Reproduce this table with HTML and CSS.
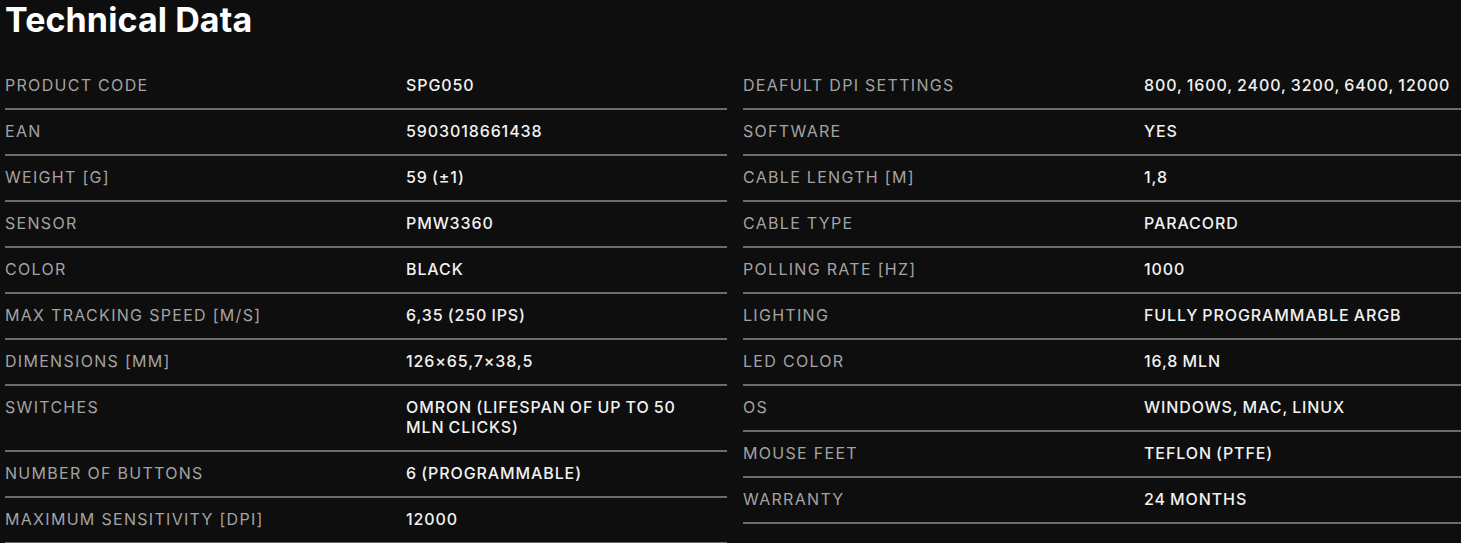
FILE: index.html
```html
<!DOCTYPE html>
<html>
<head>
<meta charset="utf-8">
<link rel="stylesheet" href="styles.css">
</head>
<body>
<section class="tech">
  <h2 class="tech-title">Technical Data</h2>
  <div class="tech-grid">
    <div class="tech-col">
      <div class="row"><div class="label">PRODUCT CODE</div><div class="value">SPG050</div></div>
      <div class="row"><div class="label">EAN</div><div class="value">5903018661438</div></div>
      <div class="row"><div class="label">WEIGHT [G]</div><div class="value">59 (±1)</div></div>
      <div class="row"><div class="label">SENSOR</div><div class="value">PMW3360</div></div>
      <div class="row"><div class="label">COLOR</div><div class="value">BLACK</div></div>
      <div class="row"><div class="label">MAX TRACKING SPEED [M/S]</div><div class="value">6,35 (250 IPS)</div></div>
      <div class="row"><div class="label">DIMENSIONS [MM]</div><div class="value">126×65,7×38,5</div></div>
      <div class="row"><div class="label">SWITCHES</div><div class="value">OMRON (LIFESPAN OF UP TO 50 MLN CLICKS)</div></div>
      <div class="row"><div class="label">NUMBER OF BUTTONS</div><div class="value">6 (PROGRAMMABLE)</div></div>
      <div class="row"><div class="label">MAXIMUM SENSITIVITY [DPI]</div><div class="value">12000</div></div>
    </div>
    <div class="tech-col">
      <div class="row"><div class="label">DEAFULT DPI SETTINGS</div><div class="value">800, 1600, 2400, 3200, 6400, 12000</div></div>
      <div class="row"><div class="label">SOFTWARE</div><div class="value">YES</div></div>
      <div class="row"><div class="label">CABLE LENGTH [M]</div><div class="value">1,8</div></div>
      <div class="row"><div class="label">CABLE TYPE</div><div class="value">PARACORD</div></div>
      <div class="row"><div class="label">POLLING RATE [HZ]</div><div class="value">1000</div></div>
      <div class="row"><div class="label">LIGHTING</div><div class="value">FULLY PROGRAMMABLE ARGB</div></div>
      <div class="row"><div class="label">LED COLOR</div><div class="value">16,8 MLN</div></div>
      <div class="row"><div class="label">OS</div><div class="value">WINDOWS, MAC, LINUX</div></div>
      <div class="row"><div class="label">MOUSE FEET</div><div class="value">TEFLON (PTFE)</div></div>
      <div class="row"><div class="label">WARRANTY</div><div class="value">24 MONTHS</div></div>
    </div>
  </div>
</section>
</body>
</html>
```
FILE: styles.css
```css
html, body {
  margin: 0;
  padding: 0;
  background: #0e0e0e;
  overflow: hidden;
}
body {
  font-family: Inter, "Open Sans", sans-serif;
  color: #ececec;
}
.tech {
  width: 1460px;
  padding-left: 5px;
}
.tech-title {
  margin: 0;
  font-size: 34px;
  font-weight: 700;
  line-height: 40px;
  color: #ffffff;
  letter-spacing: 0.1px;
}
.tech-grid {
  display: grid;
  grid-template-columns: 722px 722px;
  column-gap: 16px;
  margin-top: 24px;
  align-items: start;
}
.row {
  display: grid;
  grid-template-columns: 401px 1fr;
  padding: 11px 0 13px;
  border-bottom: 2px solid #6b6b6b;
  font-size: 16px;
  line-height: 20px;
}
.label {
  color: #a3a3a3;
  font-weight: 400;
  letter-spacing: 1.3px;
}
.value {
  max-width: 309px;
  color: #f2f2f2;
  font-weight: 500;
  letter-spacing: 0.9px;
  word-spacing: -1px;
}
```
